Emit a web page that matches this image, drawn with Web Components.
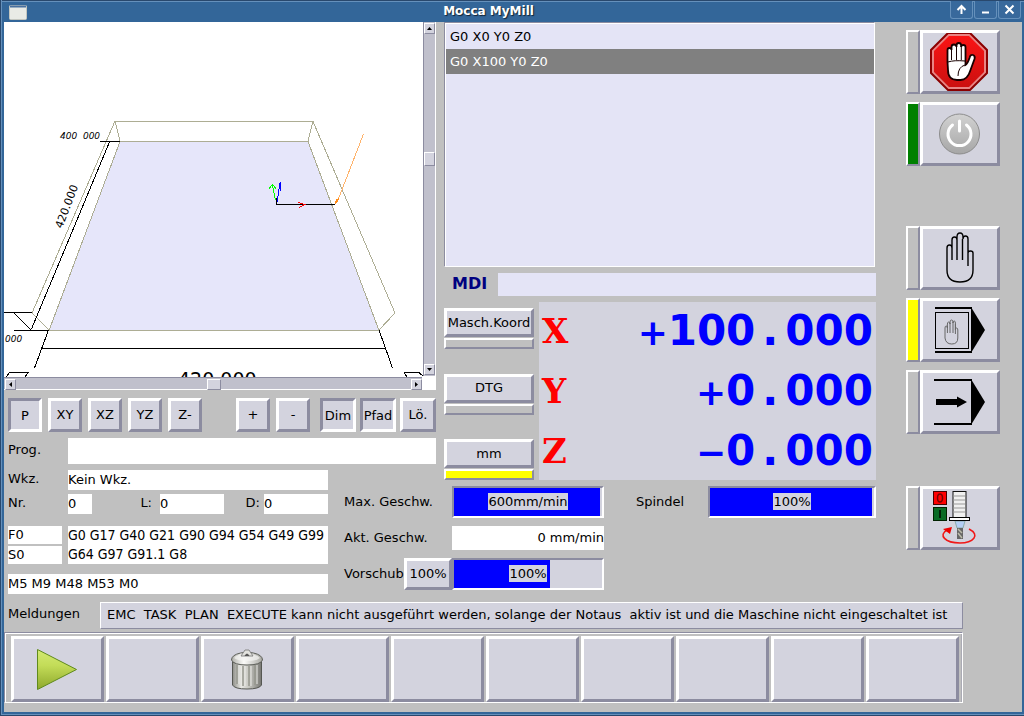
<!DOCTYPE html>
<html lang="de">
<head>
<meta charset="utf-8">
<title>Mocca MyMill</title>
<style>
  html, body { margin: 0; height: 100%; }
  body {
    --face: #d3d3de; --shade: #8c8ca0; --ground: #c0c0c0; --list: #e4e4f6;
    background: #c0c0c0; color: #000;
    font-family: "DejaVu Sans", sans-serif;
    font-size: 13px; line-height: 20px;
  }
</style>
</head>
<body>
<mill-window></mill-window>
<script>
const define = (name, html) => {
  const template = document.createElement('template');
  template.innerHTML = '<style>*{box-sizing:border-box}</style>' + html;
  customElements.define(name, class extends HTMLElement {
    constructor() {
      super();
      this.attachShadow({ mode: 'open' }).append(template.content.cloneNode(true));
    }
    connectedCallback() {
      const control = this.shadowRoot.querySelector('[data-main]');
      if (!control) return;
      const label = this.getAttribute('label');
      if (label) control.setAttribute('aria-label', label);
      if (this.hasAttribute('value')) control.value = this.getAttribute('value');
      if (this.hasAttribute('pressed')) control.setAttribute('aria-pressed', 'true');
    }
  });
};

/* raised push button; "pressed" inverts the bevel */
define('bevel-button', `
<style>
  :host { display: block; }
  button { display: flex; align-items: center; justify-content: center; width: 100%; height: 100%;
    margin: 0; padding: 0; border: 3px solid; border-color: #fff var(--shade) var(--shade) #fff;
    background: var(--face); color: inherit; font: inherit; white-space: nowrap; }
  :host([pressed]) button { border-color: var(--shade) #fff #fff var(--shade); padding-top: 1px; }
</style>
<button type="button" data-main><slot></slot></button>`);

define('status-led', `
<style>
  :host { display: block; box-sizing: border-box; border: 2px solid;
    border-color: #fff var(--shade) var(--shade) #fff; background: var(--led, var(--ground)); }
</style>`);

define('text-field', `
<style>
  :host { display: block; height: 20px; }
  input { display: block; width: 100%; height: 100%; margin: 0; padding: 0 0 2px; border: 0; border-radius: 0;
    background: var(--field, #fff); color: inherit; font: inherit; text-align: inherit; outline: 0; }
</style>
<input type="text" data-main>`);

define('level-bar', `
<style>
  :host { display: grid; align-items: center; box-sizing: border-box; height: 32px; border: 2px solid;
    border-color: var(--shade) #fff #fff var(--shade); background: var(--face); }
  i, span { grid-area: 1 / 1; }
  i { height: 28px; width: var(--level); background: #00f; }
  span { justify-self: center; line-height: 17px; background: var(--face); margin-bottom: 1px; }
</style>
<i></i><span><slot></slot></span>`);

define('title-bar', `
<style>
  :host { display: flex; height: 22px; box-sizing: border-box; padding-left: 7px; padding-right: 3px;
    background: #336699; border-top: 1px solid #29486d; box-shadow: inset 0 1px #6590bb; }
  .menu { width: 18px; height: 15px; margin-top: 4px; }
  h1 { flex: 1; margin: 0; text-align: center; color: #fff; text-shadow: 1px 1px 1px #123;
    font: bold 12px/21px "DejaVu Sans", sans-serif; }
  nav { display: flex; gap: 1px; }
  button { width: 23px; height: 18px; padding: 0; border: 1px solid #6590bb; border-top: 0;
    border-radius: 0 0 3px 3px; background: #38699c; display: grid; place-items: center; }
</style>
<svg class="menu" viewBox="0 0 18 15"><rect x=".5" y=".5" width="17" height="14" rx="1" fill="#e9ebe6" stroke="#c4c7c0"/><path d="M1 1.500H17" stroke="#49709f" stroke-width="2"/></svg>
<h1>Mocca MyMill</h1>
<nav>
  <button type="button" aria-label="Einrollen"><svg width="11" height="11" fill="none" stroke="#fff" stroke-width="2"><path d="M5.500 10V2M1.500 6L5.500 2L9.500 6"/></svg></button>
  <button type="button" aria-label="Minimieren"><svg width="11" height="11"><path d="M2 8.500H9" stroke="#fff" stroke-width="2"/></svg></button>
  <button type="button" aria-label="Schließen"><svg width="11" height="11"><path d="M1.500 1.500L9.500 9.500M9.500 1.500L1.500 9.500" stroke="#fff" stroke-width="2"/></svg></button>
</nav>`);

define('scroll-track', `
<style>
  :host { display: flex; justify-content: space-between; align-items: stretch; box-sizing: border-box;
    background: #c0c0cc; padding: 1px 0 1px 1px; border: solid var(--shade); border-width: 1px 0 0; }
  :host([vertical]) { flex-direction: column; border-width: 0 0 0 1px; padding: 1px 0; }
  button { flex: none; display: grid; place-items: center; width: 11px; height: 11px; padding: 0; border: 1px solid;
    border-color: #fff var(--shade) var(--shade) #fff; background: var(--face); }
  .thumb { width: 14px; }
  :host([vertical]) .thumb { width: 11px; height: 14px; }
  svg { width: 5px; height: 5px; }
  :host([vertical]) svg { transform: rotate(90deg); }
  .spacer { flex: 27 0 0; }
  :host([vertical]) .before { flex-grow: 118; } :host([vertical]) .after { flex-grow: 199; }
</style>
<button type="button" aria-label="Zurück"><svg viewBox="0 0 5 5"><path d="M4 0V5L1 2.500Z"/></svg></button>
<span class="spacer before"></span>
<button type="button" class="thumb" aria-label="Schieber"></button>
<span class="spacer after"></span>
<button type="button" aria-label="Vor"><svg viewBox="0 0 5 5"><path d="M1 0V5L4 2.500Z"/></svg></button>`);

/* perspective view of the work area with its dimensions, axes and tool cone */
define('tool-view', `
<style>
  :host { display: grid; grid-template: minmax(0, 1fr) 13px / minmax(0, 1fr) 13px;
    background: #fff; min-height: 0; overflow: hidden; }
  svg { width: 100%; height: 100%; min-height: 0; display: block; }
  text { font-family: "DejaVu Sans", sans-serif; }
  .v { margin: 0 1px 1px 0; } .h { margin: 0 1px 1px 0; }
</style>
<svg viewBox="4 22 419 355" preserveAspectRatio="xMidYMid slice" fill="none" stroke-width="1" shape-rendering="crispEdges">
  <path d="M120 141H308L379 330H49Z" fill="#e6e6fa"/>
  <path d="M120 141.500H308L379 330.500H49ZM115 121.500H313L395 313L379 330M313 121L308 141M120 141L115 121L32 313L49 330" stroke="#adad94"/>
  <path d="M100 141.500H120M109.500 142L31.500 329M14 330.500H49M4 312.500H32M14 313L31 330M48.500 330L34.500 368M379 330L392.500 368M42 348.500H386" stroke="#000"/>
  <path d="M6 377L9.500 372.500H28L25 377M404 372.500H419L424 377M404 372L407 377" stroke="#000"/>
  <g fill="#000" font-size="10">
    <text x="60" y="139" font-size="9" font-style="italic" xml:space="preserve">400  000</text>
    <text transform="translate(62 229) rotate(-69)" font-size="11">420.000</text>
    <text x="5" y="342" font-size="9" font-style="italic">000</text>
    <text x="178" y="386" font-size="19">420.000</text>
  </g>
  <path d="M276.500 198V204.500H335" stroke="#000"/>
  <path d="M275.500 200L272.500 185M269 188.500L272.500 184.500L276 188.500" stroke="#0f0"/>
  <path d="M277 202L280 183M280.500 182V191" stroke="#00f"/>
  <path d="M298 202.500L305 204.500L299 207.500" stroke="#f00"/>
  <path d="M363.500 134L338 200" stroke="#ffb36b"/>
  <path d="M335 204L336 199L339 198L338 202Z" fill="#ff8c1a"/>
</svg>
<scroll-track class="v" vertical></scroll-track>
<scroll-track class="h"></scroll-track>`);

define('view-buttons', `
<style>
  :host { display: flex; gap: 10px; justify-content: space-between; padding-left: 4px; }
  div { display: flex; gap: 6px; }
  .planes { margin-right: 24px; }
  bevel-button { width: 34px; height: 34px; }
  .flags { gap: 4px; } .flags bevel-button { width: 36px; }
</style>
<div class="planes"><bevel-button pressed>P</bevel-button><bevel-button>XY</bevel-button><bevel-button>XZ</bevel-button><bevel-button>YZ</bevel-button><bevel-button>Z-</bevel-button></div>
<div><bevel-button>+</bevel-button><bevel-button>-</bevel-button></div>
<div class="flags"><bevel-button pressed>Dim</bevel-button><bevel-button pressed>Pfad</bevel-button><bevel-button>Lö.</bevel-button></div>`);

define('program-row', `
<style>
  :host { display: flex; padding-left: 4px; }
  label { width: 60px; line-height: 24px; }
  text-field { flex: 1; height: 26px; }
</style>
<label>Prog.</label><text-field label="Prog." value=""></text-field>`);

define('machine-status', `
<style>
  :host { display: flex; flex-direction: column; padding: 6px 8px 0 4px; }
  label { line-height: 18px; }
  .row { display: flex; } .row > label:first-child { width: 60px; }
  .grow { flex: 1; }
  .numbers { margin-top: 4px; }
  .nr { width: 24px; } .len { width: 64px; }
  .l { width: 68px; text-align: right; padding-right: 8px; } .d { flex: 1; text-align: right; padding-right: 4px; }
  .codes { margin-top: 12px; gap: 6px; }
  .fs { width: 54px; display: flex; flex-direction: column; gap: 2px; } .fs text-field { height: 18px; }
  textarea { display: block; flex: 1; min-width: 0; height: 38px; margin: 0; padding: 0; border: 0; resize: none; overflow: hidden;
    background: #fff; color: inherit; font: 14px/19px "DejaVu Sans Condensed", "DejaVu Sans", sans-serif; white-space: pre; }
  .m { margin-top: 10px; }
</style>
<div class="row"><label>Wkz.</label><text-field class="grow" label="Wkz." value="Kein Wkz."></text-field></div>
<div class="row numbers"><label>Nr.</label><text-field class="nr" label="Nr." value="0"></text-field>
  <label class="l">L:</label><text-field class="len" label="L" value="0"></text-field>
  <label class="d">D:</label><text-field class="len" label="D" value="0"></text-field></div>
<div class="row codes"><div class="fs"><text-field label="Vorschub" value="F0"></text-field><text-field label="Spindel" value="S0"></text-field></div>
<textarea aria-label="Aktive G-Codes" readonly>G0 G17 G40 G21 G90 G94 G54 G49 G99
G64 G97 G91.1 G8</textarea></div>
<text-field class="m" label="Aktive M-Codes" value="M5 M9 M48 M53 M0"></text-field>`);

define('code-history', `
<style>
  :host { display: block; box-sizing: border-box; background: var(--list); border: 1px solid;
    border-color: var(--shade) #fff #fff var(--shade); box-shadow: inset 1px 1px #fff; padding: 1px 0 0 1px; margin-right: 1px; }
  ol { list-style: none; margin: 0; padding: 0; }
  li { line-height: 25px; padding-left: 4px; }
  li[aria-current] { background: #808080; color: #fff; }
</style>
<ol><li>G0 X0 Y0 Z0</li><li aria-current="true">G0 X100 Y0 Z0</li></ol>`);

define('mdi-row', `
<style>
  :host { display: flex; padding-left: 8px; --field: var(--list); }
  label { width: 46px; color: #000080; font-size: 16px; font-weight: bold; line-height: 22px; }
  text-field { flex: 1; height: 23px; }
</style>
<label>MDI</label><text-field label="MDI" value=""></text-field>`);

define('led-key', `
<style>
  :host { display: grid; gap: 1px; }
  bevel-button { height: 29px; } status-led { height: 11px; }
</style>
<bevel-button><slot></slot></bevel-button><status-led></status-led>`);

define('axis-readout', `
<style>
  :host { display: flex; justify-content: space-between; height: 60px; line-height: 60px; padding: 0 3px; font-weight: bold; }
  b { color: #f00; font-family: "DejaVu Serif", serif; font-size: 34px; line-height: 58px; }
  output { color: #00f; font-family: "DejaVu Sans", sans-serif; font-size: 42px; line-height: 58px; white-space: nowrap; }
</style>
<b><slot name="axis"></slot></b><output><slot></slot></output>`);

define('position-panel', `
<style>
  :host { display: flex; gap: 5px; }
  .keys { width: 90px; display: flex; flex-direction: column; justify-content: space-between; padding-top: 6px; }
  .axes { flex: 1; background: var(--face); height: 178px; overflow: hidden; }
  .sign, .point { display: inline-block; width: 30px; text-align: center; }
  .sign { font-size: 36px; }
  .on { --led: #ff0; }
</style>
<div class="keys"><led-key>Masch.Koord</led-key><led-key>DTG</led-key><led-key class="on">mm</led-key></div>
<div class="axes">
  <axis-readout><span slot="axis">X</span><span class="sign">+</span>100<span class="point">.</span>000</axis-readout>
  <axis-readout><span slot="axis">Y</span><span class="sign">+</span>0<span class="point">.</span>000</axis-readout>
  <axis-readout><span slot="axis">Z</span><span class="sign">−</span>0<span class="point">.</span>000</axis-readout>
</div>`);

define('feed-panel', `
<style>
  :host { display: grid; grid-template-columns: 60px 48px minmax(0, 152fr) 32px 72px minmax(0, 168fr);
    grid-template-rows: 32px 24px 32px; row-gap: 8px; align-items: center; align-content: start; padding: 6px 0 0 8px; white-space: nowrap; }
  .name { padding-bottom: 1px; }
  .wide { grid-column: span 2; }
  .spindle { grid-column: 5; }
  .first { grid-column: 1; }
  text-field { height: 24px; text-align: right; }
  bevel-button { height: 32px; }
</style>
<span class="name wide">Max. Geschw.</span><level-bar style="--level: 146px">600mm/min</level-bar>
<span class="name spindle">Spindel</span><level-bar style="--level: 162px">100%</level-bar>
<label class="name wide">Akt. Geschw.</label><text-field label="Akt. Geschw." value="0 mm/min"></text-field>
<span class="name first">Vorschub</span><bevel-button>100%</bevel-button><level-bar style="--level: 96px">100%</level-bar>`);

define('mode-key', `
<style>
  :host { display: flex; height: 64px; }
  status-led { width: 14px; } bevel-button { width: 80px; }
</style>
<status-led></status-led><bevel-button><slot></slot></bevel-button>`);

define('mode-column', `
<style>
  :host { display: flex; flex-direction: column; gap: 8px; padding-top: 8px; }
  .group { margin-top: 52px; } .spindle { margin-top: 44px; }
  svg { display: block; width: 74px; height: 58px; }
  .power { --led: #008000; } .mdi { --led: #ff0; }
</style>
<mode-key><svg viewBox="0 0 74 58" role="img" aria-label="Not-Aus">
  <defs><linearGradient id="r" x1="0" y1="0" x2="0" y2="1"><stop stop-color="#fa1414"/><stop offset="1" stop-color="#cc1010"/></linearGradient></defs>
  <path d="M25 0H47L64 17V40L47 57H25L8 40V17Z" fill="#e88585" stroke="#8b0000" stroke-width="2"/>
  <path d="M26 3H46L61 18V39L46 54H26L11 39V18Z" fill="url(#r)"/>
  <path d="M24.500 29V17q0-2 2-2t2 2V14q0-2.500 2.500-2.500t2.500 2.500V12.500q0-2.500 2.300-2.500t2.300 2.500V14q0-2 2.200-2t2.200 2V32q2-1 4-7q1-4 3.500-3t1.500 4l-4 11q-3 10-10 10H34q-9 0-9-10Z" fill="#fff" stroke="#180000" stroke-width="1.800"/>
  <path d="M28.500 16V27M33.500 14V27M38.300 13V27M25 29q6-2 17-1M42 32q-7 2-7 11" fill="none" stroke="#180000"/>
</svg></mode-key>
<mode-key class="power"><svg viewBox="0 0 74 58" role="img" aria-label="Maschine ein">
  <defs><linearGradient id="g" x1="0" y1="0" x2="0" y2="1"><stop stop-color="#d2d2d2"/><stop offset="1" stop-color="#a6a6a6"/></linearGradient></defs>
  <circle cx="36.500" cy="29" r="20" fill="url(#g)" stroke="#8d8d8d"/>
  <path d="M29.500 20A11.500 11.500 0 1 0 43.500 20M36.500 16V26" fill="none" stroke="#fff" stroke-width="3" stroke-linecap="round"/>
</svg></mode-key>
<mode-key class="group"><svg viewBox="0 0 74 58" role="img" aria-label="Manuell">
  <path d="M24 19q0-3 2.500-3t2.500 3V11q0-3 2.500-3t2.500 3V8q0-4 3-4t3 4V10q0-3 2.500-3t2.500 3V24q0-2 2.500-2t2.500 2V41q0 12-13 12T24 41ZM29 19V31M34 11V31M39.500 10V31M45 24V37" fill="none" stroke="#000" stroke-width="1.400"/>
</svg></mode-key>
<mode-key class="mdi"><svg viewBox="0 0 74 58" role="img" aria-label="MDI">
  <path d="M12 7H49M12 51H49" stroke="#000" stroke-width="2"/><path d="M48 6L62 29L48 52Z"/>
  <rect x="12.500" y="11.500" width="33" height="36" fill="none" stroke="#000"/>
  <path d="M22 27q0-2 1.200-2t1.200 2V23q0-2 1.300-2t1.300 2V21q0-2 1.500-2t1.500 2V22q0-2 1.200-2t1.200 2V29q0-2 1.200-2t1.200 2V37q0 6-6 6T22 37ZM24.400 25V32M27 22V32M30 21V32M32.400 23V33" fill="none" stroke="#666"/>
</svg></mode-key>
<mode-key><svg viewBox="0 0 74 58" role="img" aria-label="Automatik">
  <path d="M11 7H49M11 51H49" stroke="#000" stroke-width="2"/><path d="M48 6L62 29L48 52Z"/>
  <path d="M13 26H34V23.500L44 29L34 34.500V32H13Z"/>
</svg></mode-key>
<mode-key class="spindle"><svg viewBox="0 0 74 58" role="img" aria-label="Spindel">
  <rect x="10.500" y="2.500" width="13" height="13" fill="#f00" stroke="#400"/><ellipse cx="17" cy="9" rx="2.500" ry="4" fill="none" stroke="#700" stroke-width="1.500"/>
  <rect x="10.500" y="18.500" width="13" height="13" fill="#086b25" stroke="#020"/><path d="M17 21V29" stroke="#002008" stroke-width="2"/>
  <rect x="30" y="2.500" width="13" height="27" fill="#f0f0f0" stroke="#111"/>
  <path d="M30 7H42M30 11H42M30 15H42M30 19H42M30 23H42" stroke="#999"/>
  <path d="M32 32H42L40 39H34Z" fill="#b5cdf5" stroke="#8aa"/><path d="M34 39H40V50H34Z" fill="#666"/><path d="M35 40L39 44M35 44L39 49" stroke="#bba" stroke-width="1.500"/>
  <rect x="26.500" y="28.500" width="20" height="3" fill="#fff" stroke="#000"/>
  <path d="M46 40C58 46 50 54 37 54C22 54 15 46 24 41" fill="none" stroke="#f01818" stroke-width="1.600"/><path d="M20 40L29 38L27 45Z" fill="#e00"/>
</svg></mode-key>`);

define('message-row', `
<style>
  :host { display: flex; padding-left: 4px; margin-top: 8px; }
  span { width: 92px; line-height: 24px; }
  output { flex: 1; min-width: 0; box-sizing: border-box; height: 27px; padding-left: 6px; line-height: 23px; white-space: pre; overflow: hidden;
    background: var(--face); border: 1px solid; border-color: #fff var(--shade) var(--shade) #fff; }
</style>
<span>Meldungen</span><output>EMC  TASK  PLAN  EXECUTE kann nicht ausgeführt werden, solange der Notaus  aktiv ist und die Maschine nicht eingeschaltet ist</output>`);

define('soft-keys', `
<style>
  :host { display: flex; gap: 2px; box-sizing: border-box; margin-top: 3px; padding: 3px 3px 0 6px; border: 1px solid;
    border-color: var(--shade) #fff #fff var(--shade); box-shadow: inset 1px 1px #fff, inset -1px 0 #aaaab4; }
  bevel-button { flex: 1; height: 66px; }
  svg { display: block; width: 48px; height: 48px; }
</style>
<bevel-button><svg viewBox="0 0 48 48" role="img" aria-label="Start">
  <defs><linearGradient id="p" x1="0" y1="0" x2="0" y2="1"><stop stop-color="#d3ea72"/><stop offset=".4" stop-color="#c3dc58"/><stop offset="1" stop-color="#8ea82c"/></linearGradient></defs>
  <path d="M3.500 4.500L42.500 24.500L3.500 44.500Z" fill="url(#p)" stroke="#5f8a1c"/></svg></bevel-button>
<bevel-button></bevel-button>
<bevel-button><svg viewBox="0 0 48 48" role="img" aria-label="Löschen">
  <defs><linearGradient id="t"><stop stop-color="#8d8d87"/><stop offset=".3" stop-color="#e8e8e4"/><stop offset=".55" stop-color="#c8c8c2"/><stop offset="1" stop-color="#777772"/></linearGradient>
  <linearGradient id="u"><stop stop-color="#b0b0aa"/><stop offset=".4" stop-color="#fbfbf9"/><stop offset="1" stop-color="#a8a8a2"/></linearGradient></defs>
  <path d="M8.500 17H37.500V40q-2 4-14.500 4T8.500 40Z" fill="url(#t)" stroke="#555752"/>
  <path d="M13 20V39M19 21V41M25 21V41M31 20V40" stroke="#96988f" stroke-width="1.500"/><path d="M15 20V39M21 21V41M27 21V41M33 20V39" stroke="#e8e8e4"/>
  <path d="M7.500 15q0-5 9-7q6-2 13 0q9 2 9 7q-2 5-15.500 5T7.500 15Z" fill="url(#u)" stroke="#5c5e58"/>
  <path d="M10 13q3-4 13-4t13 4q-4 3-13 3t-13-3Z" fill="#f5f5f3" opacity=".7"/>
  <path d="M17 11L21 5H25L29 11Z" fill="#e2e2de" stroke="#888"/><path d="M20.500 11q2.500-5 5 0Z" fill="#555"/></svg></bevel-button>
<bevel-button></bevel-button><bevel-button></bevel-button><bevel-button></bevel-button><bevel-button></bevel-button><bevel-button></bevel-button><bevel-button></bevel-button><bevel-button></bevel-button>`);

define('mill-window', `
<style>
  :host { display: flex; flex-direction: column; min-height: 100vh; box-sizing: border-box; background: #6590bb;
    border: solid #29486d; border-width: 0 0 1px 1px; padding: 0 0 1px 1px; }
  .frame { flex: 1; display: flex; flex-direction: column; border: solid #336699; border-width: 0 2px 2px; background: var(--ground); }
  .board { flex: 1; display: grid; padding-right: 22px;
    grid-template-columns: minmax(0, 332fr) minmax(0, 108fr) minmax(0, 432fr) 124px;
    grid-template-rows: minmax(0, 1fr) 16px auto; }
  .view { grid-area: 1 / 1 / 2 / 3; display: flex; flex-direction: column; margin-right: 8px; }
  .view tool-view { flex: 1; } view-buttons { margin-top: 8px; } program-row { margin-top: 6px; }
  machine-status { grid-area: 2 / 1 / 4 / 2; }
  .work { grid-area: 1 / 3 / 3 / 4; display: flex; flex-direction: column; gap: 6px; }
  code-history { flex: 1; }
  feed-panel { grid-area: 3 / 2 / 4 / 4; }
  mode-column { grid-area: 1 / 4 / 4 / 5; padding-left: 30px; }
  footer { margin-right: 59px; padding-bottom: 9px; }
</style>
<title-bar></title-bar>
<div class="frame">
  <main class="board">
    <section class="view"><tool-view></tool-view><view-buttons></view-buttons><program-row></program-row></section>
    <machine-status></machine-status>
    <section class="work"><code-history></code-history><mdi-row></mdi-row><position-panel></position-panel></section>
    <feed-panel></feed-panel>
    <mode-column></mode-column>
  </main>
  <footer><message-row></message-row><soft-keys></soft-keys></footer>
</div>`);
</script>
</body>
</html>
